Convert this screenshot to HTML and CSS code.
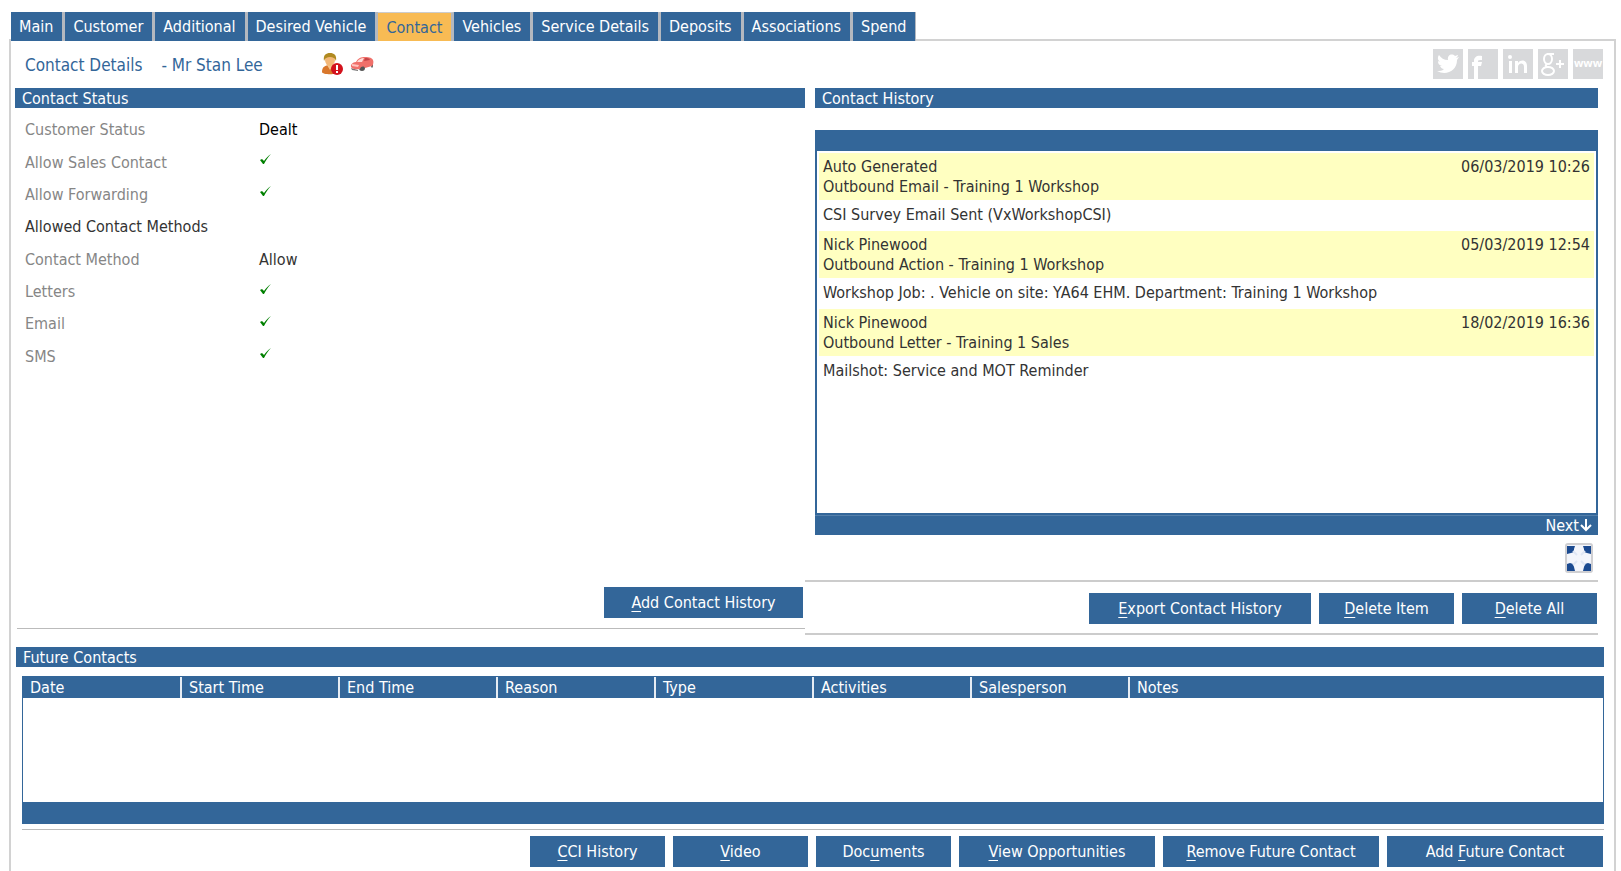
FILE: index.html
```html
<!DOCTYPE html>
<html lang="en">
<head>
  <meta charset="UTF-8">
  <meta name="viewport" content="width=device-width, initial-scale=1.0">
  <title>Contact Details</title>
  <link rel="stylesheet" href="styles.css">
</head>
<body>
  <nav class="tabs">
    <a href="#">Main</a>
    <a href="#">Customer</a>
    <a href="#">Additional</a>
    <a href="#">Desired Vehicle</a>
    <a href="#" class="active">Contact</a>
    <a href="#">Vehicles</a>
    <a href="#">Service Details</a>
    <a href="#">Deposits</a>
    <a href="#">Associations</a>
    <a href="#">Spend</a>
  </nav>

  <main class="panel">
    <header class="title-row">
      <h1>Contact Details</h1>
      <span class="customer">- Mr Stan Lee</span>
      <div class="flags">
        <svg width="23" height="24" viewBox="0 0 23 24">
          <path d="M1 20c0-5 3-7 8-7s8 2 8 7c0 3-16 3-16 0z" fill="#d9772b"/>
          <path d="M6 13l3 5 3-5z" fill="#f7c58a"/>
          <ellipse cx="9" cy="8" rx="5" ry="6" fill="#f3b878"/>
          <path d="M3 9C2 3 5 1 9 1s7 2 6 8c-1-3-3-4-6-4S4 6 3 9z" fill="#b08a20"/>
          <circle cx="16" cy="17" r="6" fill="#d3121c"/>
          <path d="M15 13h2v5h-2zM15 19h2v2h-2z" fill="#fff"/>
        </svg>
        <svg width="24" height="16" viewBox="0 0 24 16">
          <ellipse cx="12" cy="12" rx="3" ry="3" fill="#555"/>
          <ellipse cx="22" cy="9" rx="1" ry="3" fill="#555"/>
          <path d="M1 12l7 2v1l-6-1z" fill="#777"/>
          <path d="M1 9c1-2 3-3 5-3 2-4 5-5 9-5 5 0 7 1 8 3 1 2 0 5-1 6l-7 2c-1-2-4-2-5 1-4 1-10 0-9-4z" fill="#f0706a"/>
          <path d="M7 6c2-3 4-4 7-4l-2 4z" fill="#ffdcd9"/>
          <path d="M14 5l1-3c2 0 4 0 5 2z" fill="#c44448"/>
          <path d="M2 8l7 1-1 2-6-1z" fill="#ffc4bf"/>
        </svg>
      </div>
      <div class="social">
        <a href="#" aria-label="Twitter">
          <svg viewBox="0 0 30 30"><path d="M26 8l-3 1c1-1 2-2 2-3l-3 1c-3-3-8-1-7 4-4 0-7-2-9-5-2 3-1 5 1 7l-2-1c0 3 1 4 4 5H7c1 2 2 3 4 3-2 2-4 2-7 2 9 5 20 0 20-11z" fill="#fff"/></svg>
        </a>
        <a href="#" aria-label="Facebook">
          <svg viewBox="0 0 30 30"><path d="M6 30V17H4v-4h2v-1c0-4 3-6 8-5v4c-3 0-4 0-4 1v1h4l-1 4h-3v13z" fill="#fff"/></svg>
        </a>
        <a href="#" class="linkedin" aria-label="LinkedIn">
          <svg viewBox="0 0 30 30"><path d="M6 12h3v12H6zM12 12h3v2c3-4 9-3 9 3v7h-3v-6c0-5-6-4-6 0v6h-3z" fill="#fff"/><circle cx="7" cy="8" r="2" fill="#fff"/></svg>
        </a>
        <a href="#" aria-label="Google Plus">
          <svg viewBox="0 0 30 30" fill="none" stroke="#fff" stroke-width="2"><ellipse cx="10" cy="10" rx="4" ry="5"/><path d="M9 5h7M9 15c-3 2 0 3 2 3M18 15h8M22 11v8"/><ellipse cx="10" cy="22" rx="6" ry="4"/></svg>
        </a>
        <a href="#" class="www" aria-label="Website">www</a>
      </div>
    </header>

    <div class="columns">
      <section class="status">
        <h2>Contact Status</h2>
        <dl class="details">
          <dt>Customer Status</dt><dd class="strong">Dealt</dd>
          <dt>Allow Sales Contact</dt><dd><svg class="tick" viewBox="0 0 12 11"><path d="M1 6l2-1 2 2c2-3 4-5 7-7-3 3-5 6-7 10H4z"/></svg></dd>
          <dt>Allow Forwarding</dt><dd><svg class="tick" viewBox="0 0 12 11"><path d="M1 6l2-1 2 2c2-3 4-5 7-7-3 3-5 6-7 10H4z"/></svg></dd>
          <dt class="subhead">Allowed Contact Methods</dt><dd></dd>
          <dt>Contact Method</dt><dd>Allow</dd>
          <dt>Letters</dt><dd><svg class="tick" viewBox="0 0 12 11"><path d="M1 6l2-1 2 2c2-3 4-5 7-7-3 3-5 6-7 10H4z"/></svg></dd>
          <dt>Email</dt><dd><svg class="tick" viewBox="0 0 12 11"><path d="M1 6l2-1 2 2c2-3 4-5 7-7-3 3-5 6-7 10H4z"/></svg></dd>
          <dt>SMS</dt><dd><svg class="tick" viewBox="0 0 12 11"><path d="M1 6l2-1 2 2c2-3 4-5 7-7-3 3-5 6-7 10H4z"/></svg></dd>
        </dl>
        <div class="status-actions">
          <button class="btn wide"><span><u>A</u>dd Contact History</span></button>
        </div>
      </section>

      <section class="history">
        <h2>Contact History</h2>
        <div class="history-box">
          <div class="entry">
            <div><p>Auto Generated</p><p>Outbound Email - Training 1 Workshop</p></div>
            <time>06/03/2019 10:26</time>
          </div>
          <p class="note">CSI Survey Email Sent (VxWorkshopCSI)</p>
          <div class="entry">
            <div><p>Nick Pinewood</p><p>Outbound Action - Training 1 Workshop</p></div>
            <time>05/03/2019 12:54</time>
          </div>
          <p class="note">Workshop Job: . Vehicle on site: YA64 EHM. Department: Training 1 Workshop</p>
          <div class="entry">
            <div><p>Nick Pinewood</p><p>Outbound Letter - Training 1 Sales</p></div>
            <time>18/02/2019 16:36</time>
          </div>
          <p class="note">Mailshot: Service and MOT Reminder</p>
        </div>
        <div class="pager">
          <a href="#">Next<svg width="14" height="14" viewBox="0 0 14 14"><path d="M7 1v11M2 7l5 5 5-5" fill="none" stroke="#fff" stroke-width="2"/></svg></a>
        </div>
        <div class="expand-row">
          <button class="expand" aria-label="Expand">
            <svg width="28" height="30" viewBox="0 0 28 30">
              <rect x="1" y="1" width="26" height="28" rx="2" fill="#f3f5fb" stroke="#cfcfd2" stroke-width="2"/>
              <path d="M2 3h8L9 6v3l-3 1-4 1zM26 3h-8l1 3v3l3 1 4 1zM2 28h8l-1-4-1-3-3-1-3 1zM26 28h-8l1-4 1-3 3-1 3 1z" fill="#1b4a90"/>
              <path d="M8 8l4 4M20 8l-4 4M8 22l4-4M20 22l-4-4" stroke="#dfe6f4" stroke-width="2"/>
            </svg>
          </button>
        </div>
        <div class="history-actions">
          <button class="btn wide"><span><u>E</u>xport Contact History</span></button>
          <button class="btn"><span><u>D</u>elete Item</span></button>
          <button class="btn"><span><u>D</u>elete All</span></button>
        </div>
      </section>
    </div>

    <section class="future">
      <h2>Future Contacts</h2>
      <div class="future-box">
        <table>
          <thead>
            <tr>
              <th>Date</th>
              <th>Start Time</th>
              <th>End Time</th>
              <th>Reason</th>
              <th>Type</th>
              <th>Activities</th>
              <th>Salesperson</th>
              <th class="notes">Notes</th>
            </tr>
          </thead>
          <tbody></tbody>
        </table>
      </div>
      <div class="future-actions">
        <button class="btn"><span><u>C</u>CI History</span></button>
        <button class="btn"><span><u>V</u>ideo</span></button>
        <button class="btn"><span>Doc<u>u</u>ments</span></button>
        <button class="btn medium"><span><u>V</u>iew Opportunities</span></button>
        <button class="btn wide"><span><u>R</u>emove Future Contact</span></button>
        <button class="btn wide"><span>Add <u>F</u>uture Contact</span></button>
      </div>
    </section>
  </main>
</body>
</html>
```
FILE: styles.css
```css
* { box-sizing: border-box; }
body {
  margin: 12px 5px 0 9px;
  background: #fff;
  color: #333;
  font: 16px/20px "DejaVu Sans Condensed", Tahoma, sans-serif;
}
h1, h2, p, dl, dd { margin: 0; font-size: 16px; font-weight: normal; }
a { color: inherit; text-decoration: none; }
u { text-underline-offset: 3px; text-decoration-thickness: 1px; }

.tabs {
  display: flex;
  position: relative;
  height: 29px;
  margin: 0 0 -2px 2px;
}
.tabs a {
  background: #336699;
  color: #fff;
  line-height: 30px;
  padding: 0 9px 0 8px;
  border-right: 3px solid #b4b8bf;
}
.tabs a:last-child { border-right-width: 1px; }
.tabs a.active {
  background: #f8bb54;
  color: #336699;
  border-top: 1px solid #ccc;
}

.panel {
  border: 2px solid #d2d2d2;
  border-bottom: none;
  padding: 8px 10px 0 4px;
  min-height: 832px;
}
.title-row {
  display: flex;
  align-items: center;
  height: 30px;
  padding: 0 1px 0 10px;
  margin-bottom: 9px;
  color: #336699;
}
.title-row h1, .customer { font-size: 17px; line-height: 20px; padding-top: 2px; }
.customer { margin-left: 19px; }
.flags { display: flex; align-items: center; gap: 6px; margin-left: 58px; }
.social { display: flex; gap: 5px; margin-left: auto; }
.social a {
  width: 30px;
  height: 30px;
  background: #d8d9db;
  color: #fff;
}
.social svg { display: block; }
.social .www {
  font: bold 11px/28px "Open Sans", sans-serif;
  text-align: center;
}

h2 { height: 20px; line-height: 22px; background: #336699; color: #fff; padding-left: 7px; }

.columns {
  display: grid;
  grid-template-columns: 790fr 793fr;
  margin-right: 6px;
}
.details {
  display: grid;
  grid-template-columns: 234px 1fr;
  grid-template-rows: repeat(8, 1fr);
  align-items: center;
  height: 259px;
  margin-top: 6px;
  padding-left: 10px;
}
dt { color: #868686; }
dt.subhead { color: #333; }
dd.strong { color: #000; }
.tick { display: block; width: 12px; height: 11px; margin-bottom: 6px; fill: #008000; }

.status { display: flex; flex-direction: column; height: 541px; }
.status-actions {
  margin: auto 0 0 2px;
  padding: 0 2px 10px 0;
  text-align: right;
  border-bottom: 1px solid #bbb;
}
.btn {
  width: 135px;
  height: 31px;
  padding: 1px 0 0;
  border: none;
  background: #336699;
  color: #fff;
  font: inherit;
  cursor: pointer;
  vertical-align: top;
}
.btn.medium { width: 196px; }
.btn.wide { width: 216px; }
.status .btn { width: 199px; }

.history h2, .history-box, .pager { margin-left: 10px; }
.history-box {
  height: 385px;
  margin-top: 22px;
  border: 2px solid #336699;
  border-top-width: 21px;
  padding: 2px;
}
.entry {
  display: flex;
  justify-content: space-between;
  height: 47px;
  padding: 4px 4px 0;
  background: #ffffc1;
}
.note { height: 31px; padding: 5px 4px 0; }
.pager {
  height: 20px;
  padding-right: 5px;
  background: #336699;
  border-top: 1px solid #5580ab;
  color: #fff;
  text-align: right;
}
.pager svg { vertical-align: -1px; }
.expand-row {
  display: flex;
  justify-content: flex-end;
  padding: 8px 5px 7px;
  border-bottom: 2px solid #ccc;
}
.expand { padding: 0; border: none; background: none; cursor: pointer; }
.expand svg { display: block; }
.history-actions {
  display: flex;
  justify-content: flex-end;
  gap: 8px;
  padding: 11px 1px 9px;
  border-bottom: 2px solid #ccc;
}
.history-actions .btn.wide { width: 222px; }

.future { margin: 12px 0 0 1px; }
.future-box {
  height: 148px;
  margin: 9px 0 5px 6px;
  border: 1px solid #336699;
  border-bottom-width: 22px;
}
.future table { width: 100%; border-collapse: collapse; table-layout: fixed; }
.future th {
  width: 10%;
  height: 21px;
  padding: 0 0 0 7px;
  background: #336699;
  border-right: 2px solid #e6ecf3;
  color: #fff;
  font-weight: normal;
  text-align: left;
}
.future th.notes { width: 30%; border-right: none; }
.future-actions {
  display: flex;
  justify-content: flex-end;
  gap: 8px;
  margin-left: 6px;
  padding: 6px 1px 0 0;
  border-top: 1px solid #bbb;
}
```
